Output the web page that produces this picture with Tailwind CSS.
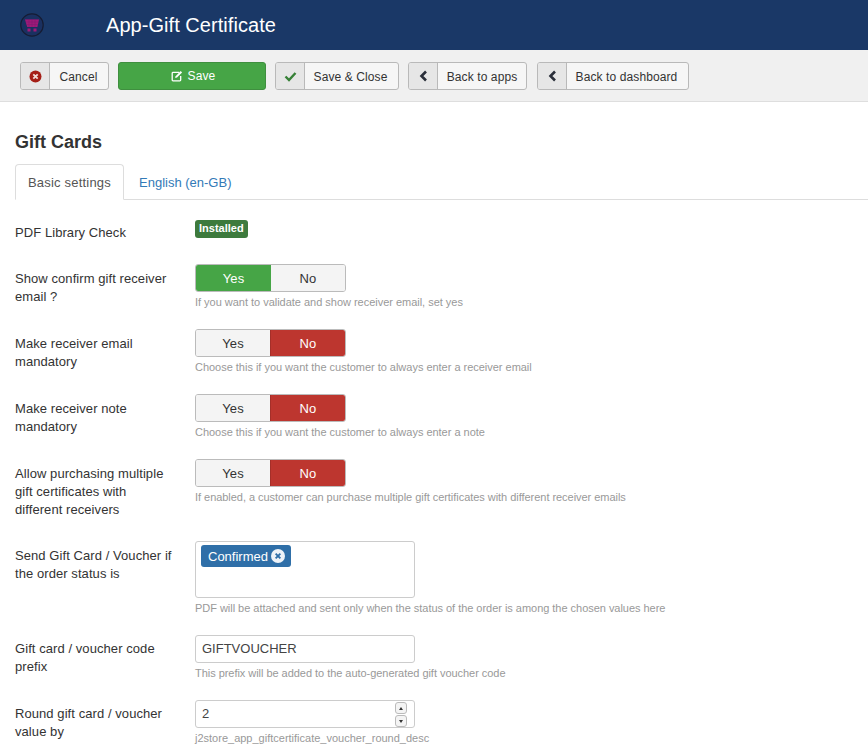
<!doctype html>
<html lang="en">
  <head>
    <meta charset="UTF-8" />
    <title>App-Gift Certificate</title>
    <script src="https://cdn.jsdelivr.net/npm/@tailwindcss/browser@4"></script>
  </head>
  <body class="bg-white font-['Liberation_Sans',Arial,sans-serif] text-[13px] text-[#333] h-[753px] overflow-hidden">
    <!-- Header -->
    <header class="h-[50px] bg-[#1a3867] flex items-center">
      <svg class="ml-[20px] w-[24px] h-[24px]" viewBox="0 0 24 24">
        <circle cx="12" cy="12" r="11.2" fill="#1a3060" stroke="#161c33" stroke-width="1.2" />
        <path d="M5 6.5h14l-1.6 7.5H7.2z" fill="#a01a78" />
        <path d="M5 6.5h14M5.5 9h13M6 11.5h12M9 6.5v7.5M12 6.5v7.5M15 6.5v7.5" stroke="#7c1a70" stroke-width="0.5" fill="none" />
        <rect x="7.5" y="15.5" width="3" height="3" fill="#a01a78" />
        <rect x="13.5" y="15.5" width="3" height="3" fill="#a01a78" />
      </svg>
      <h1 class="ml-[62px] text-[20px] text-white leading-none tracking-[0.05px]">App-Gift Certificate</h1>
    </header>

    <!-- Toolbar -->
    <div class="h-[52px] bg-[#f0f0f0] border-b border-[#dedede] pl-[20px] pt-[12px] flex items-start text-[12px] tracking-[0.1px] text-[#333]">
      <button class="h-[28px] w-[89px] flex bg-[#f6f6f6] border border-[#b9b9b9] rounded-[3px] overflow-hidden">
        <span class="w-[29px] h-full bg-[#e6e6e6] border-r border-[#b9b9b9] flex items-center justify-center">
          <svg class="w-[13px] h-[13px]" viewBox="0 0 13 13"><circle cx="6.5" cy="6.5" r="6" fill="#a51f17" /><path d="M4.300 4.300l4.400 4.400M8.700 4.300l-4.400 4.400" stroke="#f0dcd8" stroke-width="1.800" /></svg>
        </span>
        <span class="flex-1 leading-[28px] text-center pr-[1px]">Cancel</span>
      </button>
      <button class="ml-[9px] h-[28px] w-[148px] flex items-center justify-center gap-[5px] pl-[2px] bg-[#46a546] border border-[#3f8f3f] rounded-[3px] text-white">
        <svg class="w-[12px] h-[12px]" viewBox="0 0 13 13" fill="none"><path d="M9 2.500H2.200a.9.900 0 0 0-.9.900v7.400c0 .5.400.9.900.9h7.400c.5 0 .9-.4.900-.9V6.500" stroke="#fff" stroke-width="1.400" /><path d="M5 6.700l-.5 2 2-.5 5.500-5.500-1.500-1.500z" fill="#fff" /></svg>
        <span class="leading-[28px]">Save</span>
      </button>
      <button class="ml-[9px] h-[28px] w-[124px] flex bg-[#f6f6f6] border border-[#b9b9b9] rounded-[3px] overflow-hidden">
        <span class="w-[29px] h-full bg-[#e6e6e6] border-r border-[#b9b9b9] flex items-center justify-center">
          <svg class="w-[13px] h-[11px]" viewBox="0 0 13 11" fill="none"><path d="M1.500 5.500l3.500 3.500 6.500-7" stroke="#378137" stroke-width="2.400" /></svg>
        </span>
        <span class="flex-1 leading-[28px] text-center pr-[2px]">Save &amp; Close</span>
      </button>
      <button class="ml-[9px] h-[28px] w-[119px] flex bg-[#f6f6f6] border border-[#b9b9b9] rounded-[3px] overflow-hidden">
        <span class="w-[29px] h-full bg-[#e6e6e6] border-r border-[#b9b9b9] flex items-center justify-center">
          <svg class="w-[9px] h-[12px]" viewBox="0 0 9 11" fill="none"><path d="M7 1L2.500 5.500 7 10" stroke="#2a2f3a" stroke-width="2.600" /></svg>
        </span>
        <span class="flex-1 leading-[28px] text-center">Back to apps</span>
      </button>
      <button class="ml-[10px] h-[28px] w-[152px] flex bg-[#f6f6f6] border border-[#b9b9b9] rounded-[3px] overflow-hidden">
        <span class="w-[29px] h-full bg-[#e6e6e6] border-r border-[#b9b9b9] flex items-center justify-center">
          <svg class="w-[9px] h-[12px]" viewBox="0 0 9 11" fill="none"><path d="M7 1L2.500 5.500 7 10" stroke="#2a2f3a" stroke-width="2.600" /></svg>
        </span>
        <span class="flex-1 leading-[28px] text-center pr-[2px]">Back to dashboard</span>
      </button>
    </div>

    <main class="pl-[15px] tracking-[0.07px]">
      <h2 class="mt-[29px] text-[18px] font-bold leading-[22px] tracking-normal">Gift Cards</h2>

      <!-- Tabs -->
      <div class="mt-[11px] h-[36px] flex border-b border-[#ddd]">
        <div class="h-[36px] w-[109px] bg-white border border-[#ddd] border-b-white rounded-t-[4px] text-center leading-[36px] tracking-[0.2px] text-[#555]">Basic settings</div>
        <div class="ml-[15px] leading-[37px] text-[#337ab7] tracking-normal">English (en-GB)</div>
      </div>

      <!-- Form -->
      <div class="flex mt-[18px] h-[46px]">
        <label class="w-[180px] leading-[18px] pt-[6px]">PDF Library Check</label>
        <div><span class="inline-block h-[18px] px-[4px] bg-[#3d7a3d] rounded-[3px] text-[11px] font-bold leading-[17px] text-white tracking-normal">Installed</span></div>
      </div>

      <div class="flex h-[65px]">
        <label class="w-[180px] pr-[10px] leading-[18px] pt-[6px]">Show confirm gift receiver email ?</label>
        <div>
          <div class="flex w-[151px] h-[28px] border border-[#bbb] rounded-[3px] overflow-hidden">
            <span class="w-[75px] -my-px bg-[#46a546] text-white text-center leading-[29px]">Yes</span>
            <span class="flex-1 bg-[#f4f4f4] text-center leading-[27px]">No</span>
          </div>
          <p class="mt-[3px] text-[11px] leading-[14px] text-[#999] tracking-[-0.02px]">If you want to validate and show receiver email, set yes</p>
        </div>
      </div>

      <div class="flex h-[65px]">
        <label class="w-[180px] pr-[10px] leading-[18px] pt-[6px]">Make receiver email mandatory</label>
        <div>
          <div class="flex w-[151px] h-[28px] border border-[#bbb] rounded-[3px] overflow-hidden">
            <span class="w-[74px] bg-[#f4f4f4] text-center leading-[27px]">Yes</span>
            <span class="flex-1 -my-px bg-[#bd362f] text-white text-center leading-[29px] border-l border-[#a52f29]">No</span>
          </div>
          <p class="mt-[3px] text-[11px] leading-[14px] text-[#999] tracking-[-0.02px]">Choose this if you want the customer to always enter a receiver email</p>
        </div>
      </div>

      <div class="flex h-[65px]">
        <label class="w-[180px] pr-[10px] leading-[18px] pt-[6px]">Make receiver note mandatory</label>
        <div>
          <div class="flex w-[151px] h-[28px] border border-[#bbb] rounded-[3px] overflow-hidden">
            <span class="w-[74px] bg-[#f4f4f4] text-center leading-[27px]">Yes</span>
            <span class="flex-1 -my-px bg-[#bd362f] text-white text-center leading-[29px] border-l border-[#a52f29]">No</span>
          </div>
          <p class="mt-[3px] text-[11px] leading-[14px] text-[#999] tracking-[-0.02px]">Choose this if you want the customer to always enter a note</p>
        </div>
      </div>

      <div class="flex h-[82px]">
        <label class="w-[180px] pr-[22px] leading-[18px] pt-[6px]">Allow purchasing multiple gift certificates with different receivers</label>
        <div>
          <div class="flex w-[151px] h-[28px] border border-[#bbb] rounded-[3px] overflow-hidden">
            <span class="w-[74px] bg-[#f4f4f4] text-center leading-[27px]">Yes</span>
            <span class="flex-1 -my-px bg-[#bd362f] text-white text-center leading-[29px] border-l border-[#a52f29]">No</span>
          </div>
          <p class="mt-[3px] text-[11px] leading-[14px] text-[#999] tracking-[-0.04px]">If enabled, a customer can purchase multiple gift certificates with different receiver emails</p>
        </div>
      </div>

      <div class="flex h-[94px]">
        <label class="w-[180px] pr-[5px] leading-[18px] pt-[6px]">Send Gift Card / Voucher if the order status is</label>
        <div>
          <div class="w-[220px] h-[57px] border border-[#ccc] rounded-[3px] pl-[5px] pt-[3px]">
            <span class="inline-flex items-center h-[22px] pl-[7px] pr-[6px] gap-[3px] bg-[#2f6fa8] rounded-[3px] text-white leading-[23px] tracking-normal">
              Confirmed
              <svg class="w-[14px] h-[14px]" viewBox="0 0 13 13"><circle cx="6.500" cy="6.500" r="6.500" fill="#eef3f8" /><path d="M4.300 4.300l4.400 4.400M8.700 4.300l-4.400 4.400" stroke="#2f6fa8" stroke-width="1.700" /></svg>
            </span>
          </div>
          <p class="mt-[3px] text-[11px] leading-[14px] text-[#999] tracking-[-0.03px]">PDF will be attached and sent only when the status of the order is among the chosen values here</p>
        </div>
      </div>

      <div class="flex h-[65px]">
        <label class="w-[180px] pr-[10px] leading-[18px] pt-[5px]">Gift card / voucher code prefix</label>
        <div>
          <div class="w-[220px] h-[28px] border border-[#ccc] rounded-[3px] px-[6px] leading-[26px] text-[#444] tracking-normal">GIFTVOUCHER</div>
          <p class="mt-[3px] text-[11px] leading-[14px] text-[#999] tracking-[-0.04px]">This prefix will be added to the auto-generated gift voucher code</p>
        </div>
      </div>

      <div class="flex">
        <label class="w-[180px] pr-[10px] leading-[18px] pt-[5px]">Round gift card / voucher value by</label>
        <div>
          <div class="relative w-[220px] h-[28px] border border-[#ccc] rounded-[3px] px-[6px] leading-[26px] text-[#444]">
            2
            <div class="absolute right-[7px] top-px flex flex-col gap-px">
              <span class="w-[12px] h-[12px] border border-[#bbb] rounded-[3px] bg-[#f4f4f4] flex items-center justify-center"><svg class="w-[4px] h-[3px]" viewBox="0 0 4 3"><path d="M2 0l2 3H0z" fill="#333" /></svg></span>
              <span class="w-[12px] h-[12px] border border-[#bbb] rounded-[3px] bg-[#f4f4f4] flex items-center justify-center"><svg class="w-[4px] h-[3px]" viewBox="0 0 4 3"><path d="M0 0h4L2 3z" fill="#333" /></svg></span>
            </div>
          </div>
          <p class="mt-[3px] text-[11px] leading-[14px] text-[#999] tracking-normal">j2store_app_giftcertificate_voucher_round_desc</p>
        </div>
      </div>
    </main>
  </body>
</html>
